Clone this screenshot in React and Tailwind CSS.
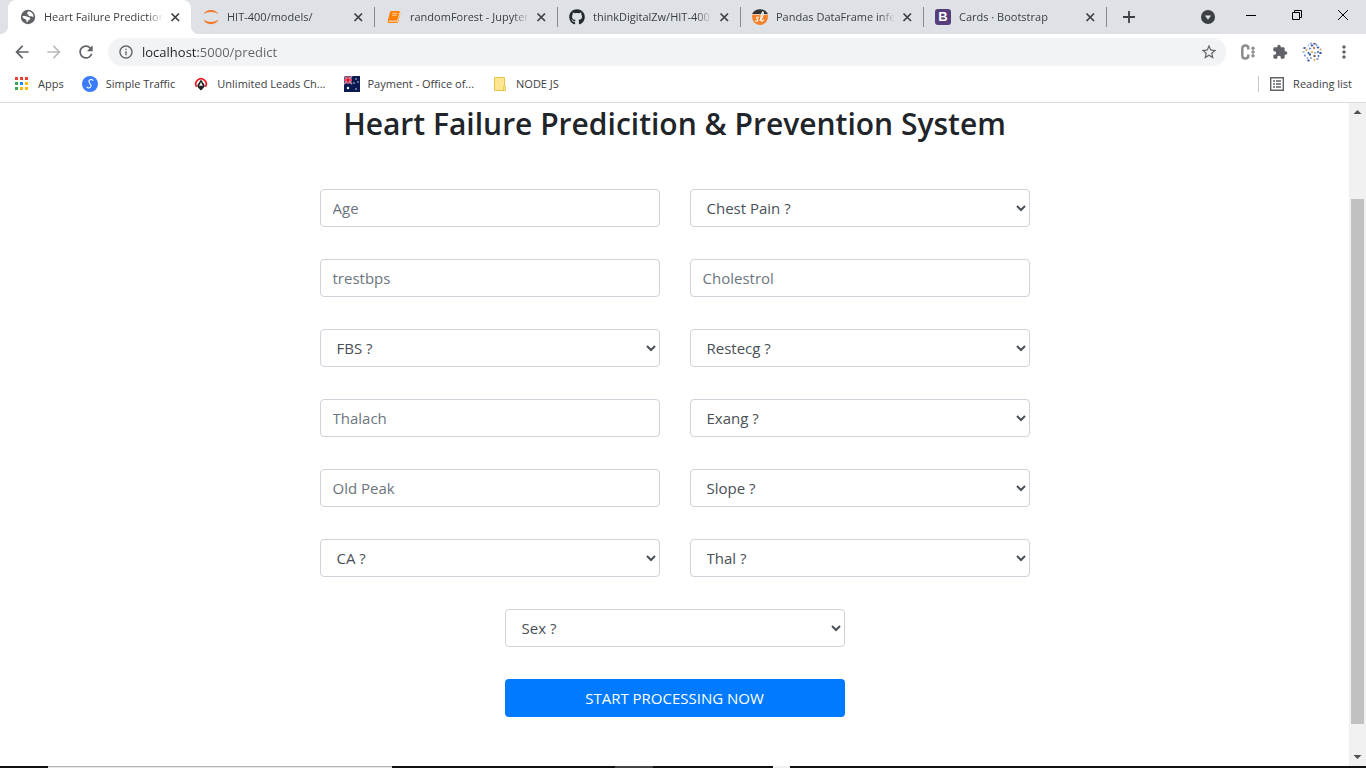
import { useState } from "react";
import {
  MdArrowBack,
  MdArrowForward,
  MdExtension,
  MdInfoOutline,
  MdMoreVert,
  MdRefresh,
  MdStarBorder,
} from "react-icons/md";
import { FaGithub } from "react-icons/fa";

function GlobeIcon() {
  return (
    <svg viewBox="0 0 16 16" className="size-4" aria-hidden="true">
      <circle cx="8" cy="8" r="7.200" fill="#5f6368" />
      <path d="M9 2.300c-1 .3-1.800.9-1.800 1.900 0 .9.900 1.200 1.300 2 .4.900 1.200 1.300 2.200 1 .9-.2 1.200.6 2.900.5-.1-2.600-2-4.800-4.600-5.400z" fill="#fff" />
      <path d="M2.300 7.200c1.400-.5 2.700 0 3.700 0 1.200 0 1.700.8 2.900 1 1.200.2 1.600 1.200 1 2-.5.700-1.300.8-1.700 1.600-.3.700-.7 1.300-1.600 1.500-.2-1.100.2-2-.7-2.800C4.700 9.600 2.500 9.400 2.300 7.200z" fill="#fff" />
    </svg>
  );
}

function JupyterIcon() {
  return (
    <svg viewBox="0 0 16 16" className="size-4" aria-hidden="true">
      <path d="M0.6 5.4C1.6 2.6 4.5 0.9 8 0.9s6.4 1.7 7.4 4.5C13.700 3.900 11 3.100 8 3.100S2.300 3.900 0.600 5.400z" fill="#f37726" />
      <path d="M0.6 10.600C1.600 13.400 4.500 15.300 8 15.300s6.400-1.900 7.400-4.700C13.700 12.100 11 12.900 8 12.900S2.300 12.100 0.600 10.600z" fill="#f37726" />
    </svg>
  );
}

function NotebookIcon() {
  return (
    <svg viewBox="0 0 16 16" className="size-4" aria-hidden="true">
      <path d="M5.200 2h7.600c.8 0 1.200.6 1 1.300l-2.200 8H3.200c-.7 0-1.200.2-1.500.7L4 3.100C4.200 2.400 4.600 2 5.200 2z" fill="#ff7f00" />
      <path d="M1.800 12.200c.2-.5.700-.6 1.300-.6h8.700l2.200-7.800.400.5-2.300 8.600c-.2.700-.7 1.100-1.400 1.100H3c-1 0-1.500-.9-1.200-1.800z" fill="#ff7f00" />
      <path d="M6.300 4.300h5.200M5.800 6.200H11M2.900 12.600h8.400L13.800 4" stroke="#ffe3c7" strokeWidth=".8" fill="none" />
    </svg>
  );
}

function PandasSiteIcon() {
  return (
    <svg viewBox="0 0 16 16" className="size-4" aria-hidden="true">
      <path d="M0 5C1.400 2 4.500.2 8 .2S14.600 2 16 5z" fill="#333" />
      <path d="M.2 5.800h15.600C16.600 11.500 13 16 8 16S-.6 11.500.2 5.800z" fill="#f5822a" />
      <path d="M6.500 8.200C4.900 7.500 3.900 9 5.200 9.900c1.300.9.700 2.800-1.700 2.100M8 11.400c2-1.900 3.600-5.600 3.200-8.200-.3-1.400-1.900 1-2.300 5-.3 3.200.2 5.200 2.600 2.800" stroke="#fff" strokeWidth="1.100" fill="none" strokeLinecap="round" />
    </svg>
  );
}

function BootstrapIcon() {
  return (
    <span className="flex size-4 items-center justify-center rounded-[3px] bg-[#563d7c] font-['Liberation_Sans',sans-serif] text-[13px] leading-4 font-bold text-white">
      B
    </span>
  );
}

function CloseIcon() {
  return (
    <svg viewBox="0 0 16 16" className="size-4" aria-hidden="true">
      <path d="M4.500 4.500l7.500 7.500M12 4.500L4.500 12" stroke="#3c4043" strokeWidth="1.700" fill="none" />
    </svg>
  );
}

function AppsIcon() {
  const colors = ["#ea4335", "#ea4335", "#ea4335", "#34a853", "#1a8cff", "#fbbc04", "#34a853", "#fbbc04", "#fbbc04"];
  return (
    <svg viewBox="0 0 16 16" className="size-4" aria-hidden="true">
      {colors.map((color, i) => (
        <rect key={i} x={1 + (i % 3) * 5} y={1 + Math.floor(i / 3) * 5} width="3" height="3" fill={color} />
      ))}
    </svg>
  );
}

function SimpleTrafficIcon() {
  return (
    <svg viewBox="0 0 16 16" className="size-4" aria-hidden="true">
      <circle cx="8" cy="8" r="8" fill="#3b7cff" />
      <path d="M11 4.200C9 2.800 6.600 4 7 6s2.600 2.200 2 4.200S6 12.400 5 11.200" stroke="#fff" strokeWidth="1.100" fill="none" strokeLinecap="round" />
    </svg>
  );
}

function LeadsIcon() {
  return (
    <svg viewBox="0 0 16 16" className="size-4" aria-hidden="true">
      <path d="M3.600 10.800A5.200 5.200 0 1 1 12.400 10.800" stroke="#f0141e" strokeWidth="1.700" fill="none" />
      <path d="M8 3.400L4.600 8.800C3.600 10.800 5.600 12 8 14.600c2.400-2.600 4.400-3.800 3.400-5.800z" fill="#222" />
      <path d="M8 6l-1.900 4.200L8 9.400l1.900.8z" fill="#fff" />
    </svg>
  );
}

function FlagIcon() {
  return (
    <svg viewBox="0 0 16 16" className="size-4" aria-hidden="true">
      <rect width="16" height="16" fill="#0a1a50" />
      <path d="M0 0l8 8M8 0L0 8" stroke="#fff" strokeWidth="1.200" />
      <path d="M4 0v8M0 4h8" stroke="#fff" strokeWidth="2.400" />
      <path d="M0 0l8 8M8 0L0 8" stroke="#e4002b" strokeWidth=".5" />
      <path d="M4 0v8M0 4h8" stroke="#e4002b" strokeWidth="1.500" />
      <g fill="#fff">
        <circle cx="4" cy="12" r="1.200" />
        <circle cx="12" cy="3" r=".7" />
        <circle cx="10" cy="7" r=".7" />
        <circle cx="14" cy="6" r=".7" />
        <circle cx="12" cy="13" r=".7" />
      </g>
    </svg>
  );
}

function FolderIcon() {
  return (
    <svg viewBox="0 0 16 16" className="size-4" aria-hidden="true">
      <path d="M2.500 1.500h10v13h-10z" fill="#ffe693" stroke="#e9c440" />
      <path d="M11.500 10.500h2v4h-2z" fill="#ffe693" stroke="#e9c440" strokeWidth=".8" />
    </svg>
  );
}

function CarbonIcon() {
  return (
    <svg viewBox="0 0 16 16" className="size-4" aria-hidden="true">
      <path d="M8.300 5.500V4.200C8.300 2.500 7.300 1.600 5.400 1.600S2.300 2.600 2.300 4.300v7.400c0 1.700 1 2.700 3.100 2.700s2.900-1 2.900-2.700v-1.200" stroke="#8d8d8d" strokeWidth="2.500" fill="none" />
      <g fill="#8d8d8d">
        <circle cx="13" cy="4.200" r="1.700" />
        <circle cx="13" cy="8" r="1.700" />
        <circle cx="13" cy="11.800" r="1.700" />
      </g>
    </svg>
  );
}

const SPECKS = [
  [9, 1.5, "#9aaac8"], [12.5, 1.7, "#5a4a80"], [6.5, 3, "#b9c6e6"], [10, 3.5, "#32509c"], [14.5, 3, "#7c98d8"],
  [2.5, 6, "#3c5bb0"], [4.5, 8, "#e0a04c"], [8, 6.5, "#6b8fd6"], [12, 6, "#c65e3c"], [16, 5.5, "#3b58a8"],
  [18.5, 7.5, "#cfae7a"], [1.5, 10, "#a7b8da"], [6.5, 11, "#2a6f9e"], [10, 10, "#e8b05e"], [8, 12.5, "#2c3f86"],
  [13, 11, "#a1b4de"], [16, 10, "#5a6fbe"], [18.5, 11, "#2b4ca0"], [3, 13.5, "#7d8fd0"], [12.5, 14, "#7a5138"],
  [16.5, 14, "#4f79cc"], [5.5, 16, "#b1bce0"], [9, 16, "#8da6dc"], [6.5, 18.5, "#3b58b0"], [12.5, 18, "#e0a95d"],
  [15.5, 17, "#8898d4"],
];

function ProfilePicture() {
  return (
    <svg viewBox="0 0 20 20" className="size-5" aria-hidden="true">
      {SPECKS.map(([x, y, color], i) => (
        <ellipse key={i} cx={x} cy={y} rx={i % 2 ? 1.3 : 0.9} ry={i % 2 ? 0.9 : 1.3} fill={color} />
      ))}
    </svg>
  );
}

function ReadingListIcon() {
  return (
    <svg viewBox="0 0 16 16" className="size-4" aria-hidden="true">
      <path d="M1.700 1.700h12.600v12.600H1.700z" fill="none" stroke="#5f6368" strokeWidth="1.400" />
      <path d="M4 5h2M4 8h2M4 11h2M7 5h5M7 8h5M7 11h5" stroke="#5f6368" strokeWidth="1.300" />
    </svg>
  );
}

const TABS = [
  { title: "Heart Failure Prediction", icon: <GlobeIcon />, active: true },
  { title: "HIT-400/models/", icon: <JupyterIcon /> },
  { title: "randomForest - Jupyter", icon: <NotebookIcon />, divided: true },
  { title: "thinkDigitalZw/HIT-400", icon: <FaGithub className="size-4 text-[#24292e]" />, divided: true },
  { title: "Pandas DataFrame infer", icon: <PandasSiteIcon />, divided: true },
  { title: "Cards · Bootstrap", icon: <BootstrapIcon />, divided: true },
];

function Tab({ title, icon, active, divided }) {
  return (
    <div
      className={
        active
          ? "relative flex h-full w-[183px] min-w-0 items-center rounded-t-lg bg-white pr-2 before:absolute before:bottom-0 before:-left-2 before:size-2 before:bg-[radial-gradient(circle_at_0_0,transparent_8px,#fff_8px)] after:absolute after:-right-2 after:bottom-0 after:size-2 after:bg-[radial-gradient(circle_at_100%_0,transparent_8px,#fff_8px)]"
          : "flex h-full w-[183px] min-w-0 items-center pr-2"
      }
    >
      <span className={divided ? "h-5 w-px bg-[#85888c]" : "h-5 w-px"} />
      <button type="button" className="flex min-w-0 flex-1 items-center gap-2 pl-[11px] text-left">
        <span className="size-4 shrink-0">{icon}</span>
        <span className="flex-1 overflow-hidden mask-r-from-[calc(100%-16px)] mask-r-to-100% whitespace-nowrap">
          {title}
        </span>
      </button>
      <button type="button" aria-label={`Close ${title}`} className="ml-1 shrink-0">
        <CloseIcon />
      </button>
    </div>
  );
}

function TabStrip() {
  return (
    <div className="flex h-[34px] items-center bg-[#dee1e6] pl-2 text-[#3c4043]">
      {TABS.map((tab) => (
        <Tab key={tab.title} {...tab} />
      ))}
      <span className="h-5 w-px bg-[#85888c]" />
      <button type="button" aria-label="New tab" className="ml-3.5">
        <svg viewBox="0 0 16 16" className="size-4" aria-hidden="true">
          <path d="M8 2v12M2 8h12" stroke="#3c4043" strokeWidth="1.800" />
        </svg>
      </button>
      <div className="ml-auto flex items-center">
        <button type="button" aria-label="Search tabs" className="mr-3">
          <svg viewBox="0 0 16 16" className="size-4" aria-hidden="true">
            <circle cx="8" cy="8" r="7" fill="#3c4043" />
            <path d="M4.800 6.500h6.400L8 10.800z" fill="#dee1e6" />
          </svg>
        </button>
        <div className="flex pb-1">
          <button type="button" aria-label="Minimize" className="flex w-[46px] justify-center">
            <svg viewBox="0 0 12 12" className="size-3" aria-hidden="true">
              <path d="M1 6.500h10" stroke="#000" />
            </svg>
          </button>
          <button type="button" aria-label="Restore" className="flex w-[46px] justify-center">
            <svg viewBox="0 0 12 12" className="size-3" aria-hidden="true">
              <path d="M1.500 3.500h7v7h-7zM3.500 3V1.500h7v7H9" stroke="#000" fill="none" />
            </svg>
          </button>
          <button type="button" aria-label="Close window" className="flex w-[46px] justify-center">
            <svg viewBox="0 0 12 12" className="size-3" aria-hidden="true">
              <path d="M1 1l10 10M11 1L1 11" stroke="#000" />
            </svg>
          </button>
        </div>
      </div>
    </div>
  );
}

function ExtensionButton({ label, children }) {
  return (
    <button type="button" aria-label={label} className="flex size-5 items-center justify-center">
      {children}
    </button>
  );
}

function Toolbar() {
  const [address, setAddress] = useState("localhost:5000/predict");
  return (
    <div className="flex h-9 items-center px-3 text-[13px] leading-5 text-[#5f6368]">
      <div className="flex w-24 shrink-0 items-center gap-3">
        <button type="button" aria-label="Back"><MdArrowBack className="size-5" /></button>
        <button type="button" aria-label="Forward" className="text-[#babcbe]"><MdArrowForward className="size-5" /></button>
        <button type="button" aria-label="Reload"><MdRefresh className="size-5" /></button>
      </div>
      <div className="flex h-7 flex-1 items-center rounded-full bg-[#f1f3f4] pr-2 pl-2.5">
        <MdInfoOutline className="size-4" />
        <input
          type="text"
          aria-label="Address"
          value={address}
          onChange={(event) => setAddress(event.target.value)}
          className="ml-2 min-w-0 flex-1 bg-[linear-gradient(90deg,#202124_56px,#5f6368_56px)] bg-clip-text text-transparent outline-none"
        />
        <button type="button" aria-label="Bookmark this page"><MdStarBorder className="size-[18px]" /></button>
      </div>
      <div className="ml-3 flex items-center gap-3">
        <ExtensionButton label="Carbon"><CarbonIcon /></ExtensionButton>
        <ExtensionButton label="Extensions"><MdExtension className="size-4" /></ExtensionButton>
        <ExtensionButton label="Profile"><ProfilePicture /></ExtensionButton>
        <ExtensionButton label="Menu"><MdMoreVert className="size-5" /></ExtensionButton>
      </div>
    </div>
  );
}

const BOOKMARKS = [
  { label: "Apps", icon: <AppsIcon /> },
  { label: "Simple Traffic", icon: <SimpleTrafficIcon /> },
  { label: "Unlimited Leads Ch...", icon: <LeadsIcon /> },
  { label: "Payment - Office of...", icon: <FlagIcon /> },
  { label: "NODE JS", icon: <FolderIcon /> },
];

function BookmarkBar() {
  return (
    <nav className="flex h-[33px] items-start border-b border-[#d9dbde] px-3.5 pt-1 text-[#3c4043]">
      <div className="flex gap-[18px]">
        {BOOKMARKS.map(({ label, icon }) => (
          <a key={label} href="#" className="flex items-center gap-2 whitespace-nowrap">
            {icon}
            {label}
          </a>
        ))}
      </div>
      <div className="ml-auto flex items-center gap-2.5">
        <span className="h-4 w-px bg-[#c8cacd]" />
        <button type="button" className="flex items-center gap-2">
          <ReadingListIcon />
          Reading list
        </button>
      </div>
    </nav>
  );
}

const FIELDS = [
  { label: "Age" },
  { label: "Chest Pain ?", options: ["Typical angina", "Atypical angina", "Non-anginal pain", "Asymptomatic"] },
  { label: "trestbps" },
  { label: "Cholestrol" },
  { label: "FBS ?", options: ["Yes", "No"] },
  { label: "Restecg ?", options: ["0", "1", "2"] },
  { label: "Thalach" },
  { label: "Exang ?", options: ["Yes", "No"] },
  { label: "Old Peak" },
  { label: "Slope ?", options: ["0", "1", "2"] },
  { label: "CA ?", options: ["0", "1", "2", "3"] },
  { label: "Thal ?", options: ["0", "1", "2", "3"] },
  { label: "Sex ?", options: ["Male", "Female"], centered: true },
];

function Field({ label, options, centered }) {
  const id = label.toLowerCase().replace(/[^a-z]+/g, "-");
  return (
    <div className={centered ? "relative col-span-2 w-[340px] justify-self-center" : "relative"}>
      <label htmlFor={id} className="sr-only">{label}</label>
      {options ? (
        <select id={id} className="block h-[38px] w-full rounded-[4px] border border-[#ced4da] bg-white px-3 text-[15px] text-[#495057]">
          <option>{label}</option>
          {options.map((option) => (
            <option key={option}>{option}</option>
          ))}
        </select>
      ) : (
        <input
          id={id}
          type="text"
          placeholder={label}
          className="block h-[38px] w-full rounded-[4px] border border-[#ced4da] bg-white px-3 text-[15px] text-[#495057] placeholder:text-[#6c757d]"
        />
      )}
    </div>
  );
}

function PredictionPage() {
  return (
    <main className="flex-1 px-4 pb-12">
      <h1 className="text-center text-[30px] leading-[42px] font-semibold text-[#212529]">
        Heart Failure Predicition &amp; Prevention System
      </h1>
      <form
        onSubmit={(event) => event.preventDefault()}
        className="mx-auto mt-11 grid max-w-[710px] grid-cols-2 gap-x-[30px] gap-y-8"
      >
        {FIELDS.map((field) => (
          <Field key={field.label} {...field} />
        ))}
        <button
          type="submit"
          className="col-span-2 h-[38px] w-[340px] justify-self-center rounded-[4px] bg-[#007bff] text-[15px] text-white"
        >
          START PROCESSING NOW
        </button>
      </form>
    </main>
  );
}

function PageScrollbar() {
  return (
    <div aria-hidden="true" className="flex w-[17px] shrink-0 flex-col bg-[#f1f1f1] px-0.5">
      <svg viewBox="0 0 13 17" className="h-[17px]">
        <path d="M2.500 11h8L6.500 7z" fill="#505050" />
      </svg>
      <div className="flex-[79]" />
      <div className="flex-[525] bg-[#c1c1c1]" />
      <div className="flex-[25]" />
      <svg viewBox="0 0 13 17" className="h-[17px]">
        <path d="M2.500 6h8L6.500 10z" fill="#505050" />
      </svg>
    </div>
  );
}

function TaskbarEdge() {
  return (
    <div aria-hidden="true" className="flex h-0.5 bg-[#101114]">
      <div className="flex-[48]" />
      <div className="flex-[344] border-t border-[#b5b5b5] bg-[#e6e6e6]" />
      <div className="flex-[223]" />
      <div className="flex-[38] bg-[#454547]" />
      <div className="flex-[120]" />
      <div className="flex-[17] bg-[#f0f0f0]" />
      <div className="flex-[576]" />
    </div>
  );
}

export default function App() {
  return (
    <div className="flex min-h-screen flex-col bg-white font-['Open_Sans','Noto_Sans',sans-serif]">
      <header className="text-[11px] leading-5">
        <TabStrip />
        <Toolbar />
        <BookmarkBar />
      </header>
      <div className="flex flex-1">
        <PredictionPage />
        <PageScrollbar />
      </div>
      <TaskbarEdge />
    </div>
  );
}
